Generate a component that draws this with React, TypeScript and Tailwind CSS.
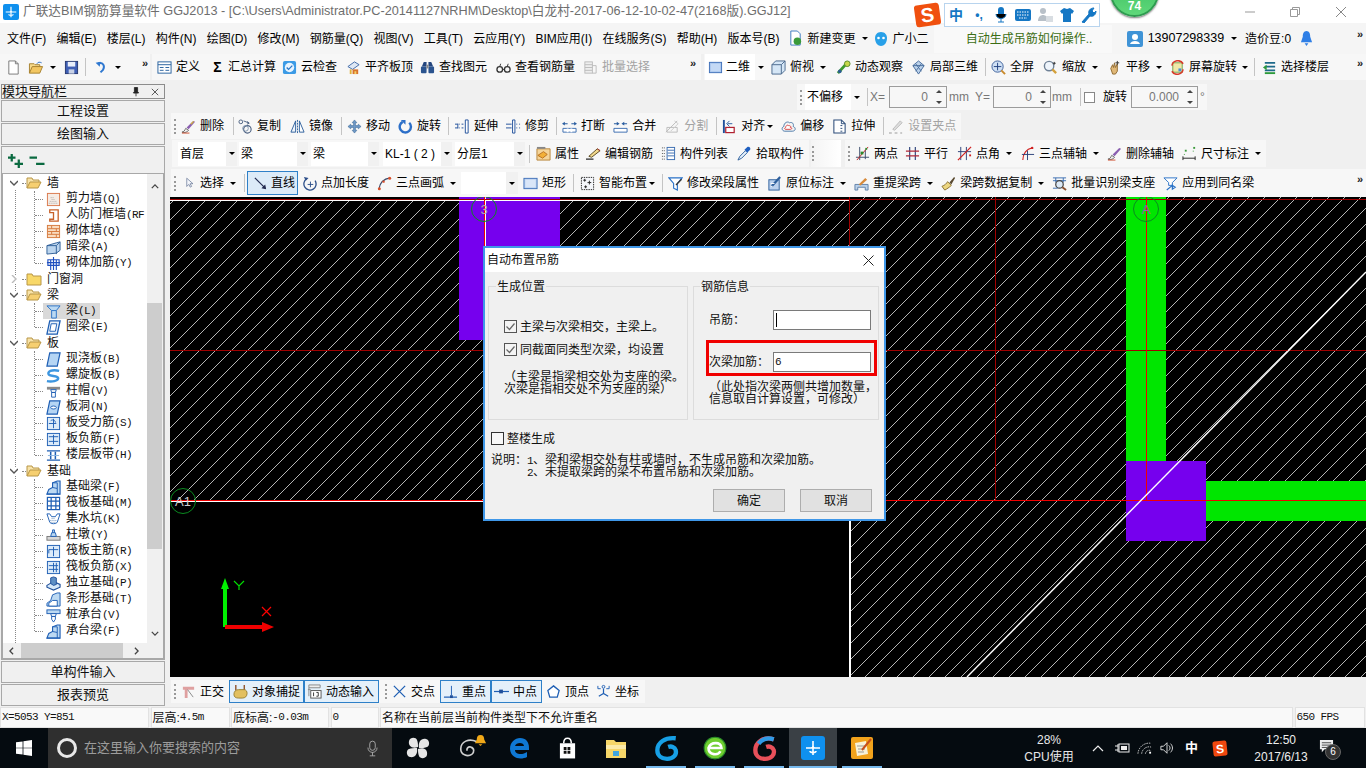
import React from 'react'

const Svg = ({ cls = 'w-[15px] h-[15px]', box = '0 0 16 16', children }: { cls?: string; box?: string; children: React.ReactNode }) => (
  <svg viewBox={box} className={`${cls} shrink-0`} fill="none">{children}</svg>
)

// toolbar icons
const Ic: Record<string, React.ReactNode> = {
  newFile: <><path d="M3 1h7l3 3v11H3z" fill="#fff" stroke="#777" /><path d="M10 1v3h3" stroke="#777" /></>,
  open: <><path d="M1 14V4h5l1 1h5v2" fill="#f6d98a" stroke="#a5802e" /><path d="M1 14l3-7h11l-3 7z" fill="#f2c661" stroke="#a5802e" /><path d="M9 4c1-2 3-2 5-1" stroke="#2f6fc0" /></>,
  save: <><rect x="1.5" y="1.5" width="13" height="13" fill="#3f5fb5" stroke="#25376f" /><rect x="4" y="2" width="8" height="5" fill="#e8eefa" /><rect x="5" y="10" width="6" height="4.5" fill="#c9d2e6" /></>,
  undo: <><path d="M5 3c6-2 9 3 6 8l-3 3" stroke="#2f78d0" strokeWidth="2.4" /><path d="M2 2l6-1-1 6z" fill="#2f78d0" /></>,
  define: <><rect x="1" y="2" width="14" height="12" fill="#fff" stroke="#26609e" /><path d="M1 5h14M3 8h4M3 11h4M9 8h4M9 11h4" stroke="#26609e" /></>,
  cloud: <><rect x="1" y="1" width="14" height="14" rx="2" fill="#3c9be6" /><circle cx="8" cy="8" r="5" fill="#e8f4ff" /><path d="M5 8l2 2 4-4" stroke="#2a78c8" strokeWidth="1.5" /></>,
  flat: <><path d="M2 7l7-5 5 3-7 5z" fill="#dfe8f4" stroke="#3f6aa8" /><path d="M7 10h6v5H7z" fill="#d8742c" /><path d="M4 10v5h2v-5z" fill="#e2b23a" /><path d="M9 12h2v3H9z" fill="#f4d26a" /></>,
  find: <><path d="M2 7l2-5h3v5zM9 7V2h3l2 5z" fill="#24467e" /><rect x="1" y="7" width="6" height="7" rx="1" fill="#2b548f" /><rect x="9" y="7" width="6" height="7" rx="1" fill="#2b548f" /><rect x="7" y="5" width="2" height="4" fill="#888" /></>,
  glasses: <><circle cx="4" cy="10" r="3" stroke="#333" strokeWidth="1.4" /><circle cx="12" cy="10" r="3" stroke="#333" strokeWidth="1.4" /><path d="M7 10h2M4 7l1-3M12 7l1-3" stroke="#333" /></>,
  batch: <><rect x="2" y="2" width="8" height="12" fill="#eee" stroke="#bbb" /><path d="M2 5h8M2 8h8M2 11h8M10 6h4v8h-4" stroke="#bbb" /></>,
  box2d: <><rect x="1.5" y="2.5" width="13" height="11" fill="#a9c6ee" stroke="#3e6fb8" /><rect x="3" y="4" width="10" height="8" fill="#c4d9f5" /></>,
  top: <><path d="M1 5l4-4h10v10l-4 4H1z" fill="#d5e6f6" stroke="#49688c" /><path d="M1 5h10v10M11 5l4-4" stroke="#49688c" /></>,
  orbit: <><path d="M2 14L12 3" stroke="#3e9a2e" strokeWidth="3" /><circle cx="12" cy="4" r="3" fill="#c8d84a" stroke="#5c8a2a" /><circle cx="4" cy="12" r="2" fill="#2b5f8f" /></>,
  local3d: <><path d="M2 6l6-5 6 5-6 9z" fill="#bcd2ea" stroke="#466c9c" /><path d="M5 4l6 8M11 4l-6 8M2 6h12" stroke="#466c9c" /></>,
  full: <><circle cx="7" cy="7" r="6" fill="#cfe0f4" stroke="#3c5f9a" /><path d="M7 3v8M3 7h8" stroke="#1f3f80" /><path d="M11 11l4 4" stroke="#c98a2c" strokeWidth="2" /></>,
  zoom: <><circle cx="6.5" cy="6.5" r="5" fill="#eef4fb" stroke="#6f8196" strokeWidth="1.5" /><path d="M10 10l4 4" stroke="#d4a13c" strokeWidth="2.4" /><path d="M12 2v3M10.5 3.5h3" stroke="#333" /></>,
  pan: <><path d="M4 9l2-4 1 3 1-5 1 5 2-4v8l-2 3H6z" fill="#e0b878" stroke="#8f6a30" /><path d="M11 1v4M9 3h4" stroke="#333" /></>,
  rotate: <><rect x="3" y="3" width="10" height="10" fill="#f1e7a8" stroke="#6da04a" /><path d="M2 6a6.5 6.5 0 0 1 12-2M14 10a6.5 6.5 0 0 1-12 2" stroke="#d83a2a" strokeWidth="1.6" /><rect x="9" y="9" width="3" height="3" fill="#4a8fd8" /></>,
  floors: <><path d="M3 3h11M3 7h11M3 11h11" stroke="#1e6a8a" strokeWidth="2" /><path d="M1 8l4-3v6z" fill="#2d9a3c" /><path d="M3 14h11" stroke="#2d9a3c" strokeWidth="2" /></>,
  del: <><path d="M1 14c2 0 3-2 4-4l3 2c-1 2-4 3-7 2z" fill="#f2f2f2" stroke="#444" strokeWidth=".8" /><path d="M6 9l7-7 2 1-7 8z" fill="#8a5fb0" /><path d="M1 15h8" stroke="#d05030" /><path d="M10 5l3-3 1 1-3 3z" fill="#d0b040" /></>,
  copy: <><rect x="1" y="1" width="4" height="4" rx="2" stroke="#4a5f80" /><path d="M6 2l5 2M10 2.5L12 4.5 9.5 5.5" stroke="#4a5f80" /><circle cx="10" cy="11" r="4" stroke="#4a5f80" strokeWidth="1.2" /><circle cx="8" cy="10" r="3" stroke="#7f93ad" /></>,
  mirror: <><path d="M1 14L6 2v12z" fill="#eef4fb" stroke="#2d5f9c" /><path d="M15 14L10 2v12z" fill="#fff" stroke="#2d5f9c" /><path d="M8 1v14" stroke="#2d5f9c" strokeDasharray="2 1" /></>,
  move: <path d="M8 1l2.5 3H9v3h3V5.5L15 8l-3 2.500V9H9v3h1.500L8 15l-2.500-3H7V9H4v1.500L1 8l3-2.500V7h3V4H5.500z" fill="#6f9ac8" stroke="#2a5a8c" strokeWidth=".5" />,
  spin: <><path d="M5 3a6 6 0 1 0 7 1" stroke="#2c6fc8" strokeWidth="2.6" /><path d="M3 1h5v5z" fill="#2c6fc8" /></>,
  extend: <><path d="M11 1h3v14h-3z" fill="#fff" stroke="#1f4f9a" /><path d="M0 5.500h3M0 9.500h3M4 5.500h1M4 9.500h1M7 5.500h2M7 9.500h2M3 5v5" stroke="#1f4f9a" /></>,
  trim: <><path d="M7 1h2.500v14H7z" fill="#fff" stroke="#1f4f9a" /><path d="M0 5.500h6M0 9.500h6M11 5.500h1M11 9.500h1M14 5.500h1M14 9.500h1" stroke="#1f4f9a" /></>,
  brk: <><path d="M1 10h14v4H1z" fill="#fff" stroke="#3a6cb0" /><path d="M6 10v4M10 10v4" stroke="#fff" strokeWidth="2" /><path d="M2 5h4M10 5h4" stroke="#2a5da0" strokeWidth="1.200" /><path d="M0 5l3-2v4zM16 5l-3-2v4z" fill="#2a5da0" /></>,
  merge: <><path d="M1 10h14v4H1z" fill="#fff" stroke="#3a6cb0" /><path d="M1 5h4M11 5h4" stroke="#2a5da0" strokeWidth="1.200" /><path d="M7 5L4 3v4zM9 5l3-2v4z" fill="#2a5da0" /></>,
  split: <><path d="M1 14L13 2M2 9h11v5H2z" stroke="#bbb" /><path d="M10 2l4 3-8 8" stroke="#ccc" /></>,
  align: <><path d="M2 1v14" stroke="#1f4f9a" strokeWidth="2" /><path d="M9 1v5M6 4l3 3 3-3" stroke="#2a5da0" transform="rotate(90 8 4)" /><rect x="4" y="9" width="9" height="5.500" fill="#fff" stroke="#b02030" strokeWidth="1.300" /></>,
  offset: <><path d="M4 13C1 13 0 9 3 8c0-4 4-6 6-4 3-1 5 1 4 4 3 1 3 5-1 5z" fill="#f4f4f4" stroke="#4a78a8" /><path d="M5 11c-1 0-2-1 0-2 0-2 2-3 3-2 2 0 3 1 2 2 2 0 2 2 0 2z" fill="#fff" stroke="#d84040" /></>,
  stretch: <><path d="M2 1h8l4 4v10H2z" fill="#fff" stroke="#2a4a78" strokeWidth="1.100" /><path d="M10 1v4h4M9 7h2M9 10h2M9 13h2" stroke="#2a4a78" /></>,
  grip: <><path d="M4 11l8-9 2 2-8 8z" fill="#ddd" stroke="#bbb" /><path d="M0 15h3M6 15h3M12 15h2" stroke="#bbb" strokeWidth="1.500" /></>,
  prop: <><path d="M1 3h14v12H1z" fill="#f5d59a" stroke="#b8843a" /><path d="M2 10l6-4 4 3-5 4z" fill="#f2b038" stroke="#b87020" /><path d="M1 1h9v2H1z" fill="#888" /></>,
  edit: <><path d="M0 14h8" stroke="#333" strokeWidth="1.400" /><path d="M3 11l9-8 3 2-9 7z" fill="#f2d88c" stroke="#5a4a20" /><path d="M12 3l3 2" stroke="#b03030" /></>,
  list: <><path d="M1 2h3M1 5h3M1 8h3M1 11h3M1 14h3" stroke="#4a4a4a" strokeDasharray="1 1" /><rect x="6.500" y="1.500" width="8" height="13" fill="#fff" stroke="#3a6cb0" /><path d="M7 4.500h7M7 7.500h7M7 10.500h7" stroke="#3a6cb0" /></>,
  pick: <><path d="M1 15l2-4 6-6 2 2-6 6z" fill="#e6f0fa" stroke="#2d5f9c" /><path d="M8 4l3-3c2-1 4 1 3 3l-3 3z" fill="#1f5fc0" /></>,
  two: <><path d="M5 1v14M1 12h14M11 4v10" stroke="#3a4a6a" /><path d="M2 15L14 1" stroke="#c82020" /><rect x="6" y="6" width="3" height="3" fill="#2a8a2a" /><rect x="11" y="2" width="2" height="2" fill="#2a8a2a" /></>,
  parallel: <><path d="M5 1v14M11 1v14" stroke="#2a3f78" strokeWidth="1.200" /><path d="M1 5.500h14M1 10.500h14" stroke="#b02838" strokeWidth="1.200" /></>,
  angle: <><path d="M4 1v14M10 1v14M1 6h14" stroke="#2a3f78" /><path d="M1 15L15 1" stroke="#d02020" strokeWidth="1.300" /><rect x="13" y="9" width="2" height="2" fill="#d02020" /></>,
  arc3: <><path d="M3 15C3 8 7 3 13 2" stroke="#d02020" strokeWidth="1.200" /><path d="M8 5v10M2 9h13" stroke="#2a3f78" /><circle cx="13" cy="2" r="1.300" fill="#d02020" /></>,
  brush: <><path d="M1 14c2 0 3-2 4-4l3 2c-1 2-4 3-7 2z" fill="#f2f2f2" stroke="#444" strokeWidth=".8" /><path d="M6 9l7-7 2 1-7 8z" fill="#8a5fb0" /><path d="M1 15h8" stroke="#d05030" /></>,
  dim: <><path d="M1 11v4M14 11v4M1 13h13" stroke="#222" /><rect x="3" y="4" width="2" height="2" fill="#3a9a3a" /><rect x="12" y="1" width="2" height="2" fill="#3a9a3a" /><path d="M2 9h1M12 5v1" stroke="#3a9a3a" /></>,
  select: <path d="M4 1v12l3-3 2 4 2-1-2-4h4z" fill="#f4f6fb" stroke="#5d6f90" />,
  line: <><path d="M2 2l11 11" stroke="#222a50" strokeWidth="1.300" /><path d="M14 14l-5-1 4-4z" fill="#222a50" /></>,
  addLen: <><path d="M14 5a6.500 6.500 0 1 1-9-2" stroke="#2d4f8a" strokeWidth="1.400" /><path d="M9 6v6M6 9h6" stroke="#2d4f8a" /><path d="M2 1l5 1-3 3z" fill="#2d4f8a" /></>,
  arc: <><path d="M2 14C3 7 7 3 14 2" stroke="#3a4a6a" strokeWidth="1.200" /><circle cx="2.500" cy="13.500" r="1.600" fill="#d8502c" /><circle cx="7" cy="6" r="1.300" fill="#d8502c" /><circle cx="13.500" cy="2.500" r="1.600" fill="#d8502c" /></>,
  rect: <><rect x="1" y="2.500" width="14" height="11" fill="#bcd2f0" stroke="#3e6fb8" /><rect x="2.500" y="4" width="11" height="8" fill="#dae6f8" /></>,
  smart: <><rect x="1.500" y="1.500" width="13" height="13" fill="#f4f6fa" stroke="#222" strokeDasharray="1.500 1" /><path d="M5 3v3M3.500 4.500h3M10 5v4M8 7h4M6 10v3M4.500 11.500h3" stroke="#222" /></>,
  segment: <><path d="M1 2h14l-5 6v7l-4-2V8z" fill="#fff" stroke="#2a72c8" strokeWidth="1.200" /><path d="M8 9l6-6 1 1-6 6z" fill="#3a3a3a" /></>,
  annot: <><rect x="2" y="4" width="11" height="11" fill="#bcd2ee" stroke="#2d5f9c" /><path d="M5 11L14 1" stroke="#2d5f9c" strokeWidth="2.400" /><path d="M4 8h4M4 11h2" stroke="#fff" /></>,
  span: <><path d="M1 15V9h14v6h-3v-3H4v3z" fill="#bcd2ea" stroke="#5f80a8" /><path d="M5 9l7-7 2 2-7 6z" fill="#d88a3a" /></>,
  dup: <><path d="M1 11c3-1 5-3 6-5l4 4c-2 2-5 4-7 5z" fill="#ecd680" stroke="#8a7030" /><path d="M9 7l5-6 1 1-4 7z" fill="#5a4a30" /></>,
  batchBeam: <><path d="M1 2h14M4 2v5M12 2v5M1 5h14" stroke="#3a6cb0" /><circle cx="8" cy="9" r="4" fill="#dbe8f6" stroke="#444" strokeWidth="1.300" /><path d="M11 12l4 3" stroke="#8a5030" strokeWidth="2" /><path d="M1 13h5" stroke="#3a6cb0" /></>,
  applySame: <><path d="M1 2h14l-5 5v3H6V7z" fill="#fff" stroke="#2a72c8" /><path d="M4 15l6-5M10 10v4l3-2z" stroke="#2a72c8" strokeWidth="1.300" /></>,
  ortho: <><path d="M2 3h12v3H7v9H4V6H2z" fill="#dfa0a0" /><path d="M7 6l6 8" stroke="#888" /></>,
  snap: <><path d="M3 1v6M12 1v6" stroke="#8a4a20" strokeWidth="1.400" /><path d="M1 11c0-3 2-5 5-5h6c2 0 3 2 3 4 0 3-2 5-5 5H6c-3 0-5-1-5-4z" fill="#e2c060" stroke="#9a8030" /></>,
  dyn: <><path d="M2 1h12v3H2z" fill="#eee" stroke="#888" /><rect x="4" y="7" width="11" height="8" fill="#fff" stroke="#555" /><path d="M2 4v9M1 6h3" stroke="#888" /><path d="M7 9v4M10 9h2v4h-2" stroke="#333" /></>,
  cross: <path d="M2 2l12 12M14 2L2 14" stroke="#1f5fb4" strokeWidth="1.400" />,
  perp: <><path d="M1 14h14" stroke="#1f5fb4" strokeWidth="1.300" /><path d="M9 2v10" stroke="#1f5fb4" /><rect x="7.500" y="12" width="3" height="3" fill="#1f4f9a" /></>,
  mid: <><path d="M0 8h16" stroke="#1f5fb4" strokeWidth="1.300" /><rect x="5.500" y="6" width="4" height="4" fill="#1f4f9a" /></>,
  vertex: <path d="M8 2l6 5-2 7H4L2 7z" fill="#fff" stroke="#1f5fb4" strokeWidth="1.400" />,
  coord: <><path d="M8 5v5M3 13l5-3 5 3" stroke="#1f5fb4" strokeWidth="1.300" /><path d="M2 2v3h3M14 2v3h-3" stroke="#1f5fb4" /><circle cx="8" cy="3" r="1.500" stroke="#1f5fb4" /></>,
}

// tree icons
const Tr: Record<string, React.ReactNode> = {
  shear: <><rect x="1.500" y="1.500" width="13" height="13" fill="#f6ece4" stroke="#d9774a" /><path d="M3 12h9M4 10h7M6 8h4M5 6h3" stroke="#a8a8a8" strokeDasharray="1 1" /></>,
  door: <path d="M4 2h9v12H4v-2h4V5H4z" fill="#fff" stroke="#c8622a" strokeWidth="1.400" />,
  brick: <><rect x="1.500" y="1.500" width="13" height="13" fill="#f9dcc0" stroke="#d5783c" /><path d="M2 5h12M2 8h12M2 11h12M6 2v3M11 5v3M6 8v3M11 11v3" stroke="#d5783c" /></>,
  dark: <><path d="M1 6l10-3 4-1v9l-4 3-10 1z" fill="#bcd5ee" stroke="#2f5f98" /><path d="M1 6h10v9M11 6l4-4" stroke="#2f5f98" /></>,
  jia: <path d="M2 4h12v6H2zM1 7h14M8 1v14M5 4v11M11 4v11" stroke="#1f4fc0" strokeWidth="1.200" />,
  beam: <><path d="M1 2h14l-4 5v8H6V7z" fill="#bcd9f2" stroke="#2a72c8" /><path d="M6 7h5" stroke="#2a72c8" /></>,
  ring: <><path d="M4 1h11l-3 14H1z" fill="#eaf2fb" stroke="#1f5fb4" strokeWidth="1.400" /><path d="M5.500 4h6L10 12H4z" fill="#fff" stroke="#1f5fb4" /></>,
  slab: <path d="M4 1h11l-3 14H1z" fill="#b5d5f4" stroke="#1f5fb4" strokeWidth="1.300" />,
  spiral: <path d="M14 3C6 1 1 4 3 7c2 2 10 1 10 4 0 3-7 4-12 3" stroke="#3d96e0" strokeWidth="2.600" />,
  cap: <><rect x="1" y="3" width="14" height="3" fill="#8a8a8a" /><path d="M5 6h6l-1 3H6zM6 9h4v5H6z" fill="#fff" stroke="#1f5fb4" /></>,
  hole: <><path d="M4 1h11l-3 14H1z" fill="#b5d5f4" stroke="#1f5fb4" strokeWidth="1.300" /><ellipse cx="8" cy="8" rx="3" ry="1.600" fill="#fff" stroke="#1f5fb4" /></>,
  rebar: <><rect x="1.500" y="1.500" width="13" height="13" fill="#dcebf9" stroke="#1f5fb4" /><path d="M8 3v10M3 8h8M5 5c3-2 5 0 5 2" stroke="#1f5fb4" /></>,
  neg: <><rect x="1.500" y="1.500" width="13" height="13" fill="#dcebf9" stroke="#1f5fb4" /><path d="M3 5h10M3 10h10M8 3v10" stroke="#1f5fb4" /></>,
  band: <><path d="M1 3h14M1 13h14" stroke="#1f5fb4" strokeWidth="1.400" /><path d="M5 4v8M10 4v8" stroke="#1f5fb4" strokeWidth="1.600" /><path d="M2 8h12" stroke="#8ab4e0" /></>,
  footing: <><path d="M1 15l2-5 4-2V3l5-2h3v14z" fill="#bcd9f2" stroke="#1f5fb4" strokeWidth="1.200" /><path d="M7 8l5 1v6M1 15h14M7 3l5 0v6" stroke="#1f5fb4" /></>,
  raft: <><rect x="1.500" y="1.500" width="13" height="13" fill="#fff" stroke="#1f5fb4" strokeWidth="1.300" /><path d="M5.500 2v12M10.500 2v12M2 5.500h12M2 10.500h12" stroke="#1f5fb4" strokeWidth="1.300" /></>,
  pit: <><path d="M1 2h3l2 3h4l2-3h3l-3 9c-1 2-7 2-8 0z" fill="#fff" stroke="#1f5fb4" /><path d="M4 9h8M5 11h6M6 7h4" stroke="#6b8fb8" strokeDasharray="1 1" /></>,
  pier: <><rect x="1" y="9" width="14" height="4" fill="#d8d8d8" stroke="#777" /><path d="M5 9l1-4h4l1 4zM7 5V2h2v3" fill="#bcd9f2" stroke="#1f5fb4" /></>,
  main: <><rect x="1.500" y="1.500" width="13" height="13" fill="#dcebf9" stroke="#1f5fb4" /><path d="M8 3v10M3 6h10M3 6v4" stroke="#1f5fb4" /></>,
  rneg: <><rect x="1.500" y="1.500" width="13" height="13" fill="#dcebf9" stroke="#1f5fb4" /><path d="M3 6h10M3 10h10M8 3v10M11 3v10" stroke="#1f5fb4" /></>,
  indep: <><path d="M1 10l7-4 7 3v3l-7 3-7-3z" fill="#d6e8f8" stroke="#1f4f9a" strokeWidth="1.200" /><path d="M5 8V2l3-1 3 1v7l-3 1z" fill="#5d8fc4" stroke="#1f4f9a" /></>,
  strip: <><path d="M1 15v-3l4-3 2-6 5-2h3v14z" fill="#bcd9f2" stroke="#1f5fb4" /><path d="M3 15V12l4-3h5v6z" fill="#fff" stroke="#1f5fb4" /></>,
  pile: <><rect x="1" y="2" width="14" height="4" fill="#bcd9f2" stroke="#1f5fb4" /><path d="M5 6h6l-1 3H6zM6 9h4v3l-2 3-2-3z" fill="#fff" stroke="#1f5fb4" /></>,
}

const Arrow = ({ cls = 'ml-[6px]' }: { cls?: string }) => (
  <span className={`${cls} block w-0 h-0 shrink-0 border-x-[3px] border-t-[3px] border-x-transparent border-t-black`} />
)

const Tool = ({ icon, label, cls = '', gray, arrow, arrowCls }: { icon: string; label: string; cls?: string; gray?: boolean; arrow?: boolean; arrowCls?: string }) => (
  <div className={`${cls} flex items-center shrink-0 ${gray ? 'text-[#a3a3a3]' : ''}`}>
    <Svg>{Ic[icon]}</Svg>
    <span className="ml-[4px] whitespace-nowrap">{label}</span>
    {arrow && <Arrow cls={arrowCls} />}
  </div>
)

const Sep = ({ cls = '' }: { cls?: string }) => <span className={`${cls} block w-px h-[18px] bg-[#c4c4c4] shrink-0`} />

const Grip = ({ cls = '' }: { cls?: string }) => (
  <span className={`${cls} block w-[2px] h-[15px] shrink-0 border-l-2 border-dotted border-[#999]`} />
)

const More = ({ cls = '' }: { cls?: string }) => <span className={`${cls} text-[11px] leading-none font-bold text-[#222] -mt-[8px]`}>»</span>

const Combo = ({ label, cls, w }: { label: string; cls: string; w: string }) => (
  <div className={`${cls} ${w} h-[24px] flex shrink-0`}>
    <div className="flex-1 min-w-0 bg-white overflow-hidden flex items-center pl-[2px] whitespace-nowrap">{label}</div>
    <div className="w-[11px] bg-[#f1f1f1] flex items-center justify-center"><Arrow cls="" /></div>
  </div>
)

const Spin = ({ value, cls = '', w }: { value: string; cls?: string; w: string }) => (
  <div className={`${cls} ${w} h-[22px] border border-[#9c9c9c] flex items-center justify-end shrink-0`}>
    <span className="text-[#777]">{value}</span>
    <div className="ml-[8px] mr-[4px] h-full flex flex-col justify-center gap-[8px]">
      <span className="block w-0 h-0 border-x-[3px] border-b-[3px] border-x-transparent border-b-[#444]" />
      <span className="block w-0 h-0 border-x-[3px] border-t-[3px] border-x-transparent border-t-[#444]" />
    </div>
  </div>
)

const Key = ({ k }: { k: string }) => <span className="[font-family:'Liberation_Mono',monospace] text-[11px] tracking-[-0.6px]">{k}</span>

const NavBtn = ({ label, cls }: { label: string; cls: string }) => (
  <div className={`${cls} mx-px border border-[#a8a8a8] flex items-center justify-center text-[13px] text-[#111]`}>{label}</div>
)

const tree = [
  { t: '墙', open: true, kids: [['shear', '剪力墙', '(Q)'], ['door', '人防门框墙', '(RF'], ['brick', '砌体墙', '(Q)'], ['dark', '暗梁', '(A)'], ['jia', '砌体加筋', '(Y)']] },
  { t: '门窗洞', open: false, kids: [] },
  { t: '梁', open: true, kids: [['beam', '梁', '(L)'], ['ring', '圈梁', '(E)']] },
  { t: '板', open: true, kids: [['slab', '现浇板', '(B)'], ['spiral', '螺旋板', '(B)'], ['cap', '柱帽', '(V)'], ['hole', '板洞', '(N)'], ['rebar', '板受力筋', '(S)'], ['neg', '板负筋', '(F)'], ['band', '楼层板带', '(H)']] },
  { t: '基础', open: true, kids: [['footing', '基础梁', '(F)'], ['raft', '筏板基础', '(M)'], ['pit', '集水坑', '(K)'], ['pier', '柱墩', '(Y)'], ['main', '筏板主筋', '(R)'], ['rneg', '筏板负筋', '(X)'], ['indep', '独立基础', '(P)'], ['strip', '条形基础', '(T)'], ['pile', '桩承台', '(V)'], ['footing', '承台梁', '(F)']] },
]

const Folder = () => (
  <Svg cls="w-[16px] h-[14px]" box="0 0 16 14">
    <path d="M1 12V2h5l1 2h6v2" fill="#f8e3a8" stroke="#b89646" />
    <path d="M1 12l3-6h11l-3 6z" fill="#f6cf70" stroke="#b89646" />
  </Svg>
)

const ClosedFolder = () => (
  <Svg cls="w-[16px] h-[14px]" box="0 0 16 14">
    <path d="M1 13V2h5l1 2h8v9z" fill="#f8d868" stroke="#b89646" />
  </Svg>
)

const Tree = () => (
  <div className="relative h-full overflow-hidden pt-[1px] text-[12px] text-[#111]">
    <span className="absolute left-[12px] top-[16px] bottom-0 border-l border-dotted border-[#888]" />
    {tree.map(g => (
      <div key={g.t}>
        <div className="relative h-[16px] flex items-center">
          <span className="ml-[7px] w-[12px] flex justify-start bg-white">
            <svg viewBox="0 0 8 8" className="w-[8px] h-[8px]">
              {g.open ? <path d="M0 2l4 4 4-4" stroke="#555" strokeWidth="1.400" fill="none" /> : <path d="M2 0l4 4-4 4" stroke="#bbb" strokeWidth="1.400" fill="none" />}
            </svg>
          </span>
          <span className="w-[4px] border-t border-dotted border-[#888]" />
          {g.open ? <Folder /> : <ClosedFolder />}
          <span className="ml-[5px]">{g.t}</span>
        </div>
        {g.kids.length > 0 && (
          <div className="relative">
            <span className="absolute left-[31px] top-0 bottom-[8px] border-l border-dotted border-[#888]" />
            {g.kids.map(k => (
              <div key={k[1] + k[2]} className="h-[16px] flex items-center pl-[32px]">
                <span className="w-[8px] border-t border-dotted border-[#888]" />
                <div className={`h-[16px] flex items-center pl-[3px] ${k[1] === '梁' ? 'bg-[#d9d9d9] w-[57px]' : ''}`}>
                  <Svg>{Tr[k[0]]}</Svg>
                  <span className="ml-[5px] -mt-[2px] whitespace-nowrap">{k[1]}<Key k={k[2]} /></span>
                </div>
              </div>
            ))}
          </div>
        )}
      </div>
    ))}
  </div>
)

const LeftPanel = () => (
  <div className="w-[166px] shrink-0 flex flex-col pt-[4px]">
    <div className="h-[15px] mx-px border border-[#8c8c8c] flex items-center text-[13px] leading-none text-[#111]">
      <span>模块导航栏</span>
      <svg viewBox="0 0 10 12" className="ml-auto w-[8px] h-[11px]"><path d="M3 1h4v5l1 1v1H2V7l1-1zM5 8v4" fill="#222" stroke="#222" /></svg>
      <svg viewBox="0 0 10 10" className="ml-[11px] mr-[5px] w-[8px] h-[8px]"><path d="M1 1l8 8M9 1L1 9" stroke="#333" /></svg>
    </div>
    <NavBtn label="工程设置" cls="h-[22px] mt-[1px]" />
    <NavBtn label="绘图输入" cls="h-[22px] mt-px" />
    <div className="mx-px h-[514px] mt-px border border-[#a8a8a8] flex flex-col">
      <div className="h-[26px] flex items-center pl-[6px] gap-[6px] shrink-0">
        <svg viewBox="0 0 16 16" className="w-[15px] h-[15px]"><path d="M0 5h8M4 1v8M7 11.500h9M11.500 7v9" stroke="#0a6a40" strokeWidth="2.400" /></svg>
        <svg viewBox="0 0 16 16" className="w-[16px] h-[15px]"><path d="M0 5h8M7 11.500h9" stroke="#0a6a40" strokeWidth="2.400" /></svg>
      </div>
      <div className="flex-1 border border-[#a8a8a8] flex flex-col min-h-0">
        <div className="flex flex-1 min-h-0">
          <div className="flex-1 min-w-0 bg-white"><Tree /></div>
          <div className="w-[15px] mr-px shrink-0 bg-[#f0f0f0] flex flex-col items-center pt-[10px] pb-[7px]">
            <svg viewBox="0 0 10 6" className="w-[8px] h-[5px] shrink-0"><path d="M1 5l4-4 4 4" stroke="#444" strokeWidth="1.600" fill="none" /></svg>
            <div className="w-full h-[246px] mt-[114px] bg-[#cdcdcd] shrink-0" />
            <svg viewBox="0 0 10 6" className="w-[8px] h-[5px] mt-auto shrink-0"><path d="M1 1l4 4 4-4" stroke="#444" strokeWidth="1.600" fill="none" /></svg>
          </div>
        </div>
        <div className="h-[15px] shrink-0 bg-[#f0f0f0] flex items-center pl-[6px]">
          <svg viewBox="0 0 6 10" className="w-[5px] h-[8px]"><path d="M5 1L1 5l4 4" stroke="#444" strokeWidth="1.600" fill="none" /></svg>
          <div className="ml-[7px] w-[102px] h-full bg-[#cdcdcd]" />
          <svg viewBox="0 0 6 10" className="ml-[11px] w-[5px] h-[8px]"><path d="M1 1l4 4-4 4" stroke="#444" strokeWidth="1.600" fill="none" /></svg>
        </div>
      </div>
    </div>
    <NavBtn label="单构件输入" cls="h-[22px] mt-px" />
    <NavBtn label="报表预览" cls="h-[22px] mt-px" />
  </div>
)

const Check = () => (
  <span className="block w-[13px] h-[13px] border border-[#555] bg-[#f4f4f4] shrink-0">
    <svg viewBox="0 0 11 11" className="w-[11px] h-[11px]"><path d="M1.500 5.500l3 3 5-6" stroke="#666" strokeWidth="1.200" fill="none" /></svg>
  </span>
)

const Dialog = () => (
  <div className="absolute left-[313px] top-[49px] w-[403px] h-[275px] border-2 border-[#3f97e8] bg-[#f0f0f0] flex flex-col text-[12px] leading-[12px] text-[#111]">
    <div className="h-[24px] bg-white flex items-center pl-[2px] pr-[10px] justify-between shrink-0">
      <span>自动布置吊筋</span>
      <svg viewBox="0 0 11 11" className="w-[11px] h-[11px]"><path d="M.5.5l10 10M10.500.5l-10 10" stroke="#222" /></svg>
    </div>
    <div className="flex ml-[3px] mt-[14px] h-[134px] gap-[5px]">
      <div className="relative w-[200px] border border-[#dcdcdc] pl-[15px] pt-[33px]">
        <span className="absolute left-[7px] -top-[6px] bg-[#f0f0f0] px-px">生成位置</span>
        <div className="flex items-center h-[13px]"><Check /><span className="ml-[3px]">主梁与次梁相交，主梁上。</span></div>
        <div className="flex items-center h-[13px] mt-[10px]"><Check /><span className="ml-[3px]">同截面同类型次梁，均设置</span></div>
        <p className="mt-[15px] whitespace-nowrap">（主梁是指梁相交处为支座的梁。<br />次梁是指相交处不为支座的梁）</p>
      </div>
      <div className="relative w-[186px] border border-[#dcdcdc] pl-[15px]">
        <span className="absolute left-[6px] -top-[6px] bg-[#f0f0f0] px-px">钢筋信息</span>
        <div className="flex items-center justify-between mt-[23px] mr-[7px]">
          <span>吊筋：</span>
          <div className="w-[98px] h-[20px] bg-white border border-[#7a7a7a] flex items-center pl-[2px]"><span className="block w-px h-[14px] bg-black" /></div>
        </div>
        <div className="relative flex items-center justify-between mt-[22px] mr-[7px]">
          <span>次梁加筋：</span>
          <div className="w-[98px] h-[20px] bg-white border border-[#7a7a7a] flex items-center pl-[1px]"><Key k="6" /></div>
          <span className="absolute -left-[3px] -right-[6px] -top-[12px] -bottom-[4px] border-[3px] border-[#f00000]" />
        </div>
        <p className="mt-[9px] whitespace-nowrap">（此处指次梁两侧共增加数量，<br />信息取自计算设置，可修改）</p>
      </div>
    </div>
    <div className="flex items-center ml-[6px] mt-[12px] h-[13px]">
      <span className="block w-[13px] h-[13px] border border-[#333] bg-[#f8f8f8]" />
      <span className="ml-[3px]">整楼生成</span>
    </div>
    <div className="ml-[6px] mt-[9px] flex h-[12px]"><span className="w-[36px] shrink-0">说明：</span><span className="whitespace-nowrap"><Key k="1" />、梁和梁相交处有柱或墙时，不生成吊筋和次梁加筋。</span></div>
    <div className="ml-[42px] flex h-[12px]"><span className="whitespace-nowrap"><Key k="2" />、未提取梁跨的梁不布置吊筋和次梁加筋。</span></div>
    <div className="flex justify-end gap-[15px] mr-[12px] mt-[11px]">
      <div className="w-[72px] h-[23px] bg-[#e1e1e1] border border-[#adadad] flex items-center justify-center">确定</div>
      <div className="w-[72px] h-[23px] bg-[#e1e1e1] border border-[#adadad] flex items-center justify-center">取消</div>
    </div>
  </div>
)

// free canvas: CAD drawing, svg coordinates are canvas local (origin at 170,197)
const Cad = () => {
  const x = (v: number) => v - 170
  const y = (v: number) => v - 197
  return (
    <svg viewBox="0 0 1196 480" className="absolute inset-0 w-[1196px] h-[480px]">
      <defs>
        <pattern id="hatch" width="16" height="16" patternUnits="userSpaceOnUse" patternTransform="translate(7 0)">
          <path d="M0 16L16 0" stroke="#b4b4b4" strokeWidth="1" shapeRendering="crispEdges" />
        </pattern>
      </defs>
      <rect width="1196" height="480" fill="#000" />
      <path d={`M0 ${y(201)}H${x(849)}V0H1196V480H${x(849)}V${y(500)}H0z`} fill="url(#hatch)" />
      <rect x={x(459)} y="0" width="101" height="143" fill="#7600ee" />
      <rect x={x(1126)} y="0" width="40" height={y(461)} fill="#00e600" />
      <rect x={x(1206)} y={y(481)} width="160" height="40" fill="#00e600" />
      <rect x={x(1126)} y={y(461)} width="80" height="80" fill="#7600ee" />
      <g shapeRendering="crispEdges">
        <path d={`M0 ${y(200.5)}H${x(849)}`} stroke="#fff" />
        <path d={`M0 ${y(501.5)}H${x(849)}`} stroke="#fff" />
        <path d={`M${x(849.5)} ${y(500)}V480`} stroke="#fff" strokeWidth="2" />
        <path d={`M${x(485.5)} 0V${y(350)}`} stroke="#fff" />
        <path d={`M0 ${y(199.5)}H1196`} stroke="#a00000" />
        <path d={`M0 ${y(350.5)}H1196`} stroke="#a00000" />
        <path d={`M0 ${y(500.5)}H1196`} stroke="#f00000" />
        <path d={`M${x(849.5)} 0V${y(500)}`} stroke="#a00000" />
        <path d={`M${x(995.5)} 0V${y(500)}`} stroke="#a00000" />
        <path d={`M${x(1146.5)} 0V${y(500)}`} stroke="#f00000" />
        <path d={`M${x(484.5)} 0V${y(350)}`} stroke="#f00000" />
      </g>
      <path d={`M${x(967)} 480L${x(1366)} ${y(272)}`} stroke="#fff" strokeWidth="1.400" />
      <circle cx={x(484)} cy={y(209)} r="12.500" stroke="#0a8a20" fill="none" />
      <circle cx={x(1146)} cy={y(209)} r="12.500" stroke="#0a8a20" fill="none" />
      <circle cx={x(183)} cy={y(501)} r="12.500" stroke="#0a8a20" fill="none" />
      <text x={x(484)} y={y(214)} textAnchor="middle" fontSize="13" fill="#aaa" fontFamily="Liberation Sans">3</text>
      <text x={x(1146)} y={y(214)} textAnchor="middle" fontSize="13" fill="#9a5ab0" fontFamily="Liberation Sans">A</text>
      <text x={x(183)} y={y(506)} textAnchor="middle" fontSize="13" fill="#ccc" fontFamily="Liberation Sans">A1</text>
      <rect x={x(223)} y={y(587)} width="4" height="40" fill="#00f000" />
      <path d={`M${x(225)} ${y(578)}L${x(229)} ${y(589)}H${x(221)}z`} fill="#00f000" />
      <rect x={x(225)} y={y(625)} width="40" height="4" fill="#f00000" />
      <path d={`M${x(274)} ${y(627)}L${x(262)} ${y(622)}V${y(632)}z`} fill="#f00000" />
      <path d={`M${x(234)} ${y(581)}l5 5 5-5M${x(239)} ${y(586)}v4`} stroke="#00e000" strokeWidth="1.200" fill="none" />
      <path d={`M${x(262)} ${y(607)}l9 9M${x(271)} ${y(607)}l-9 9`} stroke="#ff0000" strokeWidth="1.200" fill="none" />
    </svg>
  )
}

const Under = () => <span className="absolute bottom-0 left-0 right-0 h-[2px] bg-[#76b9ed]" />

const TaskIcon = ({ w, children }: { w: string; children: React.ReactNode }) => (
  <div className={`${w} h-full flex items-center justify-center relative shrink-0`}>{children}</div>
)

const Taskbar = () => (
  <div className="h-[40px] bg-[#050b10] flex items-center text-white shrink-0">
    <div className="w-[48px] h-full flex items-center justify-center">
      <svg viewBox="0 0 16 16" className="w-[16px] h-[16px]"><path d="M0 2.300l6.600-.9v6.300H0zM7.400 1.300L16 0v7.700H7.400zM0 8.300h6.600v6.300L0 13.700zM7.400 8.300H16V16l-8.600-1.200z" fill="#fff" /></svg>
    </div>
    <div className="w-[344px] h-full bg-[#2f2f2f] flex items-center pl-[9px] pr-[14px]">
      <span className="block w-[20px] h-[20px] rounded-full border-[3px] border-[#e8e8e8]" />
      <span className="ml-[7px] text-[13px] text-[#9c9c9c]">在这里输入你要搜索的内容</span>
      <svg viewBox="0 0 12 18" className="ml-auto w-[11px] h-[17px]"><rect x="3" y="1" width="6" height="10" rx="3" stroke="#aaa" fill="none" /><path d="M1 8c0 7 10 7 10 0M6 13v4M3 17h6" stroke="#aaa" fill="none" /></svg>
    </div>
    <TaskIcon w="w-[51px]">
      <svg viewBox="0 0 24 24" className="w-[24px] h-[24px]"><path d="M12 11C6 13 2 10 3 5c1-4 7-4 8-1 1 2 1 5 1 7zM13 12c-1-6 2-10 7-9 4 1 4 7 1 8-2 1-5 1-8 1zM12 13c6-2 10 1 9 6-1 4-7 4-8 1-1-2-1-5-1-7zM11 12c1 6-2 10-7 9-4-1-4-7-1-8 2-1 5-1 8-1z" fill="#e6e6e6" /></svg>
    </TaskIcon>
    <TaskIcon w="w-[51px]">
      <div className="relative">
        <svg viewBox="0 0 24 24" className="w-[22px] h-[22px]"><path d="M20 5C12 1 3 5 3 13c0 6 7 9 12 6 3-2 3-7-1-8-3-1-5 2-4 4" stroke="#cfcfcf" strokeWidth="1.800" fill="none" /></svg>
        <svg viewBox="0 0 14 14" className="absolute -right-[7px] -top-[3px] w-[13px] h-[13px]"><path d="M7 1c3 0 4 2 4 5l2 4H1l2-4c0-3 1-5 4-5zM5 11h4l-2 2z" fill="#f0a818" /></svg>
      </div>
    </TaskIcon>
    <TaskIcon w="w-[50px]">
      <svg viewBox="0 0 24 24" className="w-[24px] h-[24px]"><path d="M3 13C3 6 8 2 13 2c6 0 9 4 9 10v2H8c0 5 8 5 12 2v5c-6 3-16 2-17-8zM8 10h9c0-4-8-4-9 0z" fill="#0f78d4" /></svg>
    </TaskIcon>
    <TaskIcon w="w-[47px]">
      <svg viewBox="0 0 20 24" className="w-[19px] h-[24px]"><path d="M2 7h16v16H2z" fill="#fff" /><path d="M6 7c0-7 8-7 8 0" stroke="#fff" strokeWidth="1.600" fill="none" /><path d="M6 11h3v3H6zM10 11h3v3h-3zM6 15h3v3H6zM10 15h3v3h-3z" fill="#111" /></svg>
    </TaskIcon>
    <TaskIcon w="w-[49px]">
      <svg viewBox="0 0 24 24" className="w-[24px] h-[24px]"><path d="M2 4h8l2 2h10v16H2z" fill="#f6d668" /><path d="M2 9h20v4H2z" fill="#fbeaa8" /><path d="M9 15h6v5H9z" fill="#3fa5e0" /></svg>
    </TaskIcon>
    <div className="ml-[6px] w-[40px] h-full flex items-center justify-center relative shrink-0">
      <svg viewBox="0 0 24 24" className="w-[26px] h-[26px]"><path d="M21 3C11 2 4 7 4 14c0 5 4 8 9 8 6 0 9-4 8-8-1-3-4-4-7-3" stroke="#17a0e6" strokeWidth="4" fill="none" /></svg>
      <Under />
    </div>
    <div className="ml-[9px] w-[40px] h-full flex items-center justify-center relative shrink-0">
      <svg viewBox="0 0 24 24" className="w-[26px] h-[26px]"><circle cx="12" cy="12" r="10" fill="#6fce2f" stroke="#2a8a2a" /><path d="M6 12h12c0-6-10-6-12 0 0 7 9 7 11 3" stroke="#fff" strokeWidth="2.400" fill="none" /></svg>
      <Under />
    </div>
    <div className="ml-[9px] w-[40px] h-full flex items-center justify-center relative shrink-0">
      <svg viewBox="0 0 24 24" className="w-[26px] h-[26px]"><path d="M21 4C11 1 4 7 4 14c0 5 4 8 9 8 6 0 9-4 8-8-1-3-4-4-7-3" stroke="#e8505a" strokeWidth="4" fill="none" /><path d="M21 4C15 2 10 4 7 8" stroke="#2f9be8" strokeWidth="4" fill="none" /></svg>
      <Under />
    </div>
    <div className="ml-[5px] w-[48px] h-full bg-[#3a4045] flex items-center justify-center relative shrink-0">
      <span className="w-[24px] h-[24px] rounded-[3px] bg-[#0f90ee] flex items-center justify-center">
        <svg viewBox="0 0 16 16" className="w-[16px] h-[16px]"><path d="M8 1v14M1 8h5a2 2 0 0 0 2-2M15 8h-5a2 2 0 0 1-2-2M5 11c0 2 6 2 6 0" stroke="#fff" strokeWidth="1.600" fill="none" /></svg>
      </span>
      <Under />
    </div>
    <div className="ml-[5px] w-[40px] h-full flex items-center justify-center relative shrink-0">
      <svg viewBox="0 0 24 24" className="w-[24px] h-[24px]"><rect x="1" y="1" width="22" height="22" rx="2" fill="#f2a31c" /><path d="M5 7l11-2 2 13-11 2z" fill="#f8f2d8" /><path d="M7 10h8M8 13h7M8 16h6" stroke="#999" /><path d="M12 14L21 3" stroke="#c8501c" strokeWidth="2" /></svg>
      <Under />
    </div>
    <div className="ml-[132px] mt-[2px] w-[70px] text-center text-[12px] leading-[17px] shrink-0 text-[#e8e8e8]">
      <div>28%</div>
      <div>CPU使用</div>
    </div>
    <svg viewBox="0 0 12 8" className="ml-[8px] w-[12px] h-[8px] shrink-0"><path d="M1 7l5-5 5 5" stroke="#eee" strokeWidth="1.200" fill="none" /></svg>
    <svg viewBox="0 0 16 14" className="ml-[10px] w-[16px] h-[14px] shrink-0"><rect x="5" y="3" width="10" height="8" stroke="#eee" fill="none" /><rect x="7" y="5" width="6" height="4" fill="#eee" /><path d="M1 5h3M1 9h3M4 3v8" stroke="#eee" /></svg>
    <svg viewBox="0 0 16 14" className="ml-[7px] w-[15px] h-[14px] shrink-0"><path d="M1 13a12 12 0 0 1 14-11M5 13a8 8 0 0 1 10-7M9 13a4 4 0 0 1 6-3" stroke="#ddd" strokeDasharray="1.500 1" fill="none" /><path d="M13 11h2v2h-2z" fill="#fff" /></svg>
    <svg viewBox="0 0 16 16" className="ml-[8px] w-[14px] h-[16px] shrink-0"><path d="M1 6h3l4-4v12l-4-4H1zM10 5c2 2 2 4 0 6M12 3c3 3 3 7 0 10" stroke="#eee" fill="none" /></svg>
    <span className="ml-[11px] text-[13px] font-bold shrink-0">中</span>
    <span className="ml-[15px] w-[14px] h-[15px] bg-[#f0480f] rounded-[2px] -rotate-6 flex items-center justify-center text-[12px] font-bold leading-none shrink-0">S</span>
    <div className="ml-[14px] mt-[2px] w-[80px] text-center text-[12px] leading-[17px] shrink-0 text-[#eee]">
      <div>12:50</div>
      <div>2017/6/13</div>
    </div>
    <div className="ml-[-2px] relative w-[18px] h-[18px] shrink-0">
      <svg viewBox="0 0 16 16" className="w-[15px] h-[15px]"><path d="M1 1h14v10H6l-3 3v-3H1z" fill="#eee" /><path d="M3 4h10M3 6.500h10M3 9h7" stroke="#444" /></svg>
      <span className="absolute left-[6px] top-[5px] w-[16px] h-[16px] rounded-full bg-[#333] border border-[#666] text-[10px] leading-[14px] text-center">6</span>
    </div>
  </div>
)

const Cell = ({ cls, children }: { cls: string; children?: React.ReactNode }) => (
  <div className={`${cls} h-full border border-[#e2e2e2] bg-[#f9f9f9] flex items-center pl-[1px] whitespace-nowrap shrink-0`}>{children}</div>
)

export default function App() {
  return (
    <div className="relative w-[1366px] h-[768px] overflow-hidden flex flex-col bg-[#f0f0f0] text-[12px] text-black [font-family:'Liberation_Sans','Noto_Sans_CJK_SC',sans-serif]">
      {/* title bar */}
      <div className="h-[23px] bg-white flex items-center shrink-0">
        <span className="ml-[3px] w-[16px] h-[16px] rounded-[2px] bg-[#0f90ee] flex items-center justify-center shrink-0">
          <svg viewBox="0 0 16 16" className="w-[12px] h-[12px]"><path d="M8 1v14M1 8h5a2 2 0 0 0 2-2M15 8h-5a2 2 0 0 1-2-2M5 11c0 2 6 2 6 0" stroke="#fff" strokeWidth="1.600" fill="none" /></svg>
        </span>
        <span className="ml-[4px] text-[#6e6e6e] whitespace-nowrap text-[12.700px]">广联达BIM钢筋算量软件 GGJ2013 - [C:\Users\Administrator.PC-20141127NRHM\Desktop\白龙村-2017-06-12-10-02-47(2168版).GGJ12]</span>
        <svg viewBox="0 0 10 10" className="ml-auto mr-[35px] w-[10px] h-[10px]"><path d="M0 5h10" stroke="#999" /></svg>
        <svg viewBox="0 0 10 10" className="mr-[36px] w-[10px] h-[10px]"><path d="M.5 2.500h7v7h-7zM2.500 2.500v-2h7v7h-2" stroke="#999" fill="none" /></svg>
        <svg viewBox="0 0 10 10" className="mr-[20px] w-[10px] h-[10px]"><path d="M0 0l10 10M10 0L0 10" stroke="#888" /></svg>
      </div>

      {/* menu */}
      <div className="h-[31px] flex items-center pl-[7px] bg-[#f5f5f5] shrink-0">
        <div className="flex gap-[10.250px] whitespace-nowrap">
          {['文件(F)', '编辑(E)', '楼层(L)', '构件(N)', '绘图(D)', '修改(M)', '钢筋量(Q)', '视图(V)', '工具(T)', '云应用(Y)', 'BIM应用(I)', '在线服务(S)', '帮助(H)', '版本号(B)'].map(m => <span key={m}>{m}</span>)}
        </div>
        <svg viewBox="0 0 16 18" className="ml-[8px] w-[15px] h-[17px] shrink-0"><path d="M3 1h7l3 3v12H3z" fill="#fff" stroke="#3a78c0" /><circle cx="10" cy="12" r="4" fill="#3a9a3a" /></svg>
        <span className="ml-[5px]">新建变更</span>
        <Arrow />
        <svg viewBox="0 0 16 16" className="ml-[5px] w-[16px] h-[16px] shrink-0"><path d="M8 1c4 0 6 3 6 6 0 5-3 8-6 8s-6-3-6-8c0-3 2-6 6-6z" fill="#28a0e8" /><circle cx="5.500" cy="7" r="1.300" fill="#fff" /><circle cx="10.500" cy="7" r="1.300" fill="#fff" /></svg>
        <span className="ml-[4px]">广小二</span>
        <div className="ml-[5px] w-[178px] h-[28px] bg-[#f9f9f9] text-[#3c6e14] flex items-center pl-[32px]">自动生成吊筋如何操作..</div>
        <svg viewBox="0 0 16 16" className="ml-[15px] w-[16px] h-[16px] shrink-0"><rect width="16" height="16" rx="2" fill="#3f93d6" /><circle cx="8" cy="6" r="3" fill="#fff" /><path d="M3 13c1-4 9-4 10 0z" fill="#fff" /></svg>
        <span className="ml-[5px] text-[12.500px]">13907298339</span>
        <Arrow cls="ml-[7px]" />
        <span className="ml-[8px]">造价豆:0</span>
        <svg viewBox="0 0 14 18" className="ml-[9px] w-[13px] h-[17px] shrink-0"><path d="M7 1c3 0 4 3 4 6l2 6H1l2-6c0-3 1-6 4-6zM5 14h4l-2 3z" fill="#2f7fe6" /></svg>
        <More cls="ml-auto mr-[3px]" />
      </div>

      {/* toolbar 1 */}
      <div className="h-[26px] flex shrink-0">
        <div className="w-[150px] bg-[#f7f7f7] flex items-center shrink-0">
          <Svg cls="ml-[6px] w-[15px] h-[15px]">{Ic.newFile}</Svg>
          <Svg cls="ml-[7px] w-[16px] h-[15px]">{Ic.open}</Svg>
          <Arrow />
          <Svg cls="ml-[8px] w-[15px] h-[15px]">{Ic.save}</Svg>
          <Sep cls="ml-[6px]" />
          <Svg cls="ml-[8px] w-[13px] h-[15px]">{Ic.undo}</Svg>
          <Arrow cls="ml-[8px]" />
          <More cls="ml-[21px]" />
        </div>
        <div className="ml-[2px] w-[549px] bg-[#f7f7f7] flex items-center shrink-0">
          <Tool icon="define" label="定义" cls="ml-[5px]" />
          <div className="ml-[10px] flex items-center"><span className="w-[15px] text-center text-[14px] font-bold leading-none">Σ</span><span className="ml-[3px]">汇总计算</span></div>
          <Tool icon="cloud" label="云检查" cls="ml-[6px]" />
          <Tool icon="flat" label="平齐板顶" cls="ml-[9px]" />
          <Tool icon="find" label="查找图元" cls="ml-[7px]" />
          <Tool icon="glasses" label="查看钢筋量" cls="ml-[9px]" />
          <Tool icon="batch" label="批量选择" cls="ml-[8px]" gray />
          <More cls="ml-auto mr-[5px]" />
        </div>
        <div className="ml-[3px] flex-1 bg-[#f7f7f7] flex items-center">
          <div className="ml-[1px] w-[50px] h-full bg-white flex items-center pl-[3px]">
            <Svg>{Ic.box2d}</Svg><span className="ml-[3px]">二维</span>
          </div>
          <div className="w-[12px] flex justify-center"><Arrow cls="" /></div>
          <Tool icon="top" label="俯视" cls="ml-[4px]" arrow />
          <Tool icon="orbit" label="动态观察" cls="ml-[10px]" />
          <Tool icon="local3d" label="局部三维" cls="ml-[8px]" />
          <Sep cls="ml-[7px]" />
          <Tool icon="full" label="全屏" cls="ml-[5px]" />
          <Tool icon="zoom" label="缩放" cls="ml-[9px]" arrow />
          <Tool icon="pan" label="平移" cls="ml-[9px]" arrow />
          <Tool icon="rotate" label="屏幕旋转" cls="ml-[8px]" arrow arrowCls="ml-[5px]" />
          <Sep cls="ml-[6px]" />
          <Tool icon="floors" label="选择楼层" cls="ml-[7px]" />
          <More cls="ml-auto mr-[3px]" />
        </div>
      </div>

      {/* main */}
      <div className="flex flex-1 min-h-0">
        <LeftPanel />
        <div className="flex-1 min-w-0 flex flex-col">
          {/* offset row */}
          <div className="mt-[4px] ml-[631px] w-[410px] h-[26px] bg-[#f7f7f7] flex items-center shrink-0">
            <Grip cls="ml-[3px]" />
            <div className="ml-[3px] w-[46px] h-full bg-white flex items-center pl-[2px]">不偏移</div>
            <div className="w-[11px] flex justify-center"><Arrow cls="" /></div>
            <Sep cls="ml-[5px]" />
            <span className="ml-[2px] w-[19px] text-[#777]">X=</span>
            <Spin value="0" w="w-[58px]" />
            <span className="ml-[2px] w-[26px] text-[#777]">mm</span>
            <span className="w-[18px] text-[#777]">Y=</span>
            <Spin value="0" w="w-[58px]" />
            <span className="ml-[1px] w-[26px] text-[#777]">mm</span>
            <Sep cls="ml-[2px]" />
            <span className="ml-[3px] block w-[11px] h-[11px] border border-[#888] bg-white shrink-0" />
            <span className="ml-[8px]">旋转</span>
            <Spin value="0.000" cls="ml-[4px]" w="w-[67px]" />
            <span className="ml-[2px] text-[#777]">°</span>
          </div>

          {/* edit row */}
          <div className="mt-[3px] ml-[5px] w-[790px] h-[26px] bg-[#f7f7f7] flex items-center shrink-0">
            <Grip cls="ml-[3px]" />
            <Tool icon="del" label="删除" cls="ml-[5px]" />
            <Sep cls="ml-[9px]" />
            <Tool icon="copy" label="复制" cls="ml-[4px]" />
            <Tool icon="mirror" label="镜像" cls="ml-[9px]" />
            <Sep cls="ml-[8px]" />
            <Tool icon="move" label="移动" cls="ml-[5px]" />
            <Tool icon="spin" label="旋转" cls="ml-[8px]" />
            <Sep cls="ml-[7px]" />
            <Tool icon="extend" label="延伸" cls="ml-[6px]" />
            <Tool icon="trim" label="修剪" cls="ml-[8px]" />
            <Sep cls="ml-[7px]" />
            <Tool icon="brk" label="打断" cls="ml-[5px]" />
            <Tool icon="merge" label="合并" cls="ml-[8px]" />
            <Tool icon="split" label="分割" cls="ml-[9px]" gray />
            <Sep cls="ml-[8px]" />
            <Tool icon="align" label="对齐" cls="ml-[5px]" arrow arrowCls="ml-[2px]" />
            <Tool icon="offset" label="偏移" cls="ml-[8px]" />
            <Tool icon="stretch" label="拉伸" cls="ml-[8px]" />
            <Sep cls="ml-[8px]" />
            <Tool icon="grip" label="设置夹点" cls="ml-[5px]" gray />
          </div>

          {/* property row */}
          <div className="mt-px h-[27px] flex shrink-0">
            <div className="ml-[6px] w-[637px] bg-[#f7f7f7] flex items-center shrink-0">
              <Combo label="首层" cls="ml-[6px]" w="w-[59px]" />
              <Combo label="梁" cls="ml-[2px]" w="w-[69px]" />
              <Combo label="梁" cls="ml-[3px]" w="w-[68px]" />
              <Combo label="KL-1 ( 2 )" cls="ml-[4px]" w="w-[69px]" />
              <Combo label="分层1" cls="ml-[3px]" w="w-[70px]" />
              <Sep cls="ml-[4px]" />
              <Tool icon="prop" label="属性" cls="ml-[6px]" />
              <Tool icon="edit" label="编辑钢筋" cls="ml-[7px]" />
              <Tool icon="list" label="构件列表" cls="ml-[8px]" />
              <Tool icon="pick" label="拾取构件" cls="ml-[9px]" />
            </div>
            <div className="ml-[2px] w-[30px] bg-gradient-to-r from-[#f4f4f4] to-white flex items-center shrink-0">
              <Grip cls="ml-[1px]" />
            </div>
            <div className="ml-[4px] w-[421px] bg-[#f7f7f7] flex items-center shrink-0">
              <Grip cls="ml-[3px]" />
              <Tool icon="two" label="两点" cls="ml-[5px]" />
              <Tool icon="parallel" label="平行" cls="ml-[7px]" />
              <Tool icon="angle" label="点角" cls="ml-[9px]" arrow />
              <Tool icon="arc3" label="三点辅轴" cls="ml-[8px]" arrow />
              <Tool icon="brush" label="删除辅轴" cls="ml-[8px]" />
              <Tool icon="dim" label="尺寸标注" cls="ml-[8px]" arrow />
            </div>
          </div>

          {/* draw row */}
          <div className="mt-[2px] ml-[5px] h-[28px] bg-[#f7f7f7] flex items-center shrink-0">
            <Grip cls="ml-[3px]" />
            <Svg cls="ml-[8px] w-[11px] h-[14px]">{Ic.select}</Svg>
            <span className="ml-[5px]">选择</span>
            <Arrow />
            <Sep cls="ml-[8px]" />
            <div className="ml-[2px] w-[51px] h-[24px] border border-[#2e80c8] bg-[#dcebf8] flex items-center pl-[5px] shrink-0">
              <Svg>{Ic.line}</Svg><span className="ml-[3px]">直线</span>
            </div>
            <Tool icon="addLen" label="点加长度" cls="ml-[4px]" />
            <Tool icon="arc" label="三点画弧" cls="ml-[8px]" arrow />
            <div className="ml-[5px] w-[57px] h-[22px] flex shrink-0">
              <div className="flex-1 bg-white" />
              <div className="w-[12px] bg-[#f1f1f1] flex items-center justify-center"><Arrow cls="" /></div>
            </div>
            <Tool icon="rect" label="矩形" cls="ml-[5px]" />
            <Sep cls="ml-[7px]" />
            <Tool icon="smart" label="智能布置" cls="ml-[6px]" arrow arrowCls="ml-[2px]" />
            <Sep cls="ml-[7px]" />
            <Tool icon="segment" label="修改梁段属性" cls="ml-[5px]" />
            <Tool icon="annot" label="原位标注" cls="ml-[8px]" arrow />
            <Tool icon="span" label="重提梁跨" cls="ml-[8px]" arrow />
            <Tool icon="dup" label="梁跨数据复制" cls="ml-[8px]" arrow />
            <Tool icon="batchBeam" label="批量识别梁支座" cls="ml-[8px]" />
            <Tool icon="applySame" label="应用到同名梁" cls="ml-[8px]" />
            <More cls="ml-auto mr-[3px]" />
          </div>

          {/* canvas */}
          <div className="relative ml-[4px] h-[480px] shrink-0 overflow-hidden bg-black">
            <Cad />
            <Dialog />
          </div>

          {/* bottom tool row */}
          <div className="mt-[3px] ml-[5px] w-[474px] h-[23px] bg-[#f7f7f7] flex items-center shrink-0">
            <Grip cls="ml-[3px]" />
            <Tool icon="ortho" label="正交" cls="ml-[5px]" />
            <div className="ml-[5px] w-[75px] h-full border border-[#2e80c8] bg-[#e4f0fa] flex items-center pl-[3px] shrink-0"><Svg>{Ic.snap}</Svg><span className="ml-[4px]">对象捕捉</span></div>
            <div className="w-[75px] h-full border border-[#2e80c8] bg-[#e4f0fa] flex items-center pl-[2px] shrink-0"><Svg>{Ic.dyn}</Svg><span className="ml-[4px]">动态输入</span></div>
            <Grip cls="ml-[6px]" />
            <Tool icon="cross" label="交点" cls="ml-[5px]" />
            <div className="ml-[5px] w-[51px] h-full border border-[#2e80c8] bg-[#e4f0fa] flex items-center pl-[2px] shrink-0"><Svg>{Ic.perp}</Svg><span className="ml-[4px]">重点</span></div>
            <div className="w-[51px] h-full border border-[#2e80c8] bg-[#e4f0fa] flex items-center pl-[2px] shrink-0"><Svg>{Ic.mid}</Svg><span className="ml-[4px]">中点</span></div>
            <Tool icon="vertex" label="顶点" cls="ml-[4px]" />
            <Tool icon="coord" label="坐标" cls="ml-[7px]" />
          </div>
        </div>
      </div>

      {/* status bar */}
      <div className="h-[21px] flex gap-[1.500px] shrink-0 text-[#111]">
        <Cell cls="w-[149px]"><Key k="X=5053 Y=851" /></Cell>
        <Cell cls="w-[79px]">层高:<Key k="4.5m" /></Cell>
        <Cell cls="w-[98px]">底标高:<Key k="-0.03m" /></Cell>
        <Cell cls="w-[48px]"><Key k="0" /></Cell>
        <Cell cls="w-[913px]">名称在当前层当前构件类型下不允许重名</Cell>
        <Cell cls="w-[70px]"><Key k="650 FPS" /></Cell>
      </div>

      <Taskbar />

      {/* floating over the title bar: IME bar and score ball */}
      <div className="absolute left-[915px] top-[3px] flex items-center">
        <span className="w-[25px] h-[22px] bg-[#f0500f] rounded-[3px] -rotate-[8deg] flex items-center justify-center text-white text-[20px] font-bold leading-none">S</span>
        <div className="ml-[4px] w-[156px] h-[24px] bg-white border border-[#b8d4ee] flex items-center pl-[4px] gap-[6px] text-[#1577c4]">
          <span className="w-[16px] text-[14px] font-bold leading-none">中</span>
          <span className="w-[16px] text-center font-bold leading-none">•,</span>
          <svg viewBox="0 0 16 16" className="w-[16px] h-[16px]"><rect x="5" y="0" width="6" height="11" rx="3" fill="#1577c4" /><path d="M3 7c0 6 10 6 10 0M8 12v3M5 15h6" stroke="#1577c4" /></svg>
          <svg viewBox="0 0 16 16" className="w-[16px] h-[16px]"><rect x="0" y="2" width="16" height="12" rx="2" fill="#1577c4" /><path d="M2 5h12M2 8h12M4 11h8" stroke="#fff" strokeDasharray="1.500 1" /></svg>
          <svg viewBox="0 0 16 16" className="w-[16px] h-[16px]"><circle cx="6" cy="4" r="3" fill="#b8c0c8" /><path d="M1 14c0-8 10-8 10 0z" fill="#b8c0c8" /><rect x="9" y="9" width="7" height="6" fill="#d8dde2" /></svg>
          <svg viewBox="0 0 16 16" className="w-[16px] h-[16px]"><path d="M5 1l3 1 3-1 4 3-2 3-1-1v9H4V6L3 7 1 4z" fill="#1577c4" /></svg>
          <svg viewBox="0 0 16 16" className="w-[16px] h-[16px]"><path d="M1 15l7-8c-1-3 1-6 5-6l-2 3 2 2 2-2c0 4-3 6-6 5l-6 7z" fill="#1577c4" stroke="#1577c4" /></svg>
        </div>
      </div>
      <div className="absolute left-[1110px] -top-[32px] w-[49px] h-[49px] rounded-full border-2 border-[#2f9a50] bg-gradient-to-b from-[#2db85a] to-[#5fd87a] flex items-end justify-center pb-[3px] text-white text-[12px] leading-[12px] font-bold shadow-[0_1px_2px_#777]">74</div>
    </div>
  )
}
